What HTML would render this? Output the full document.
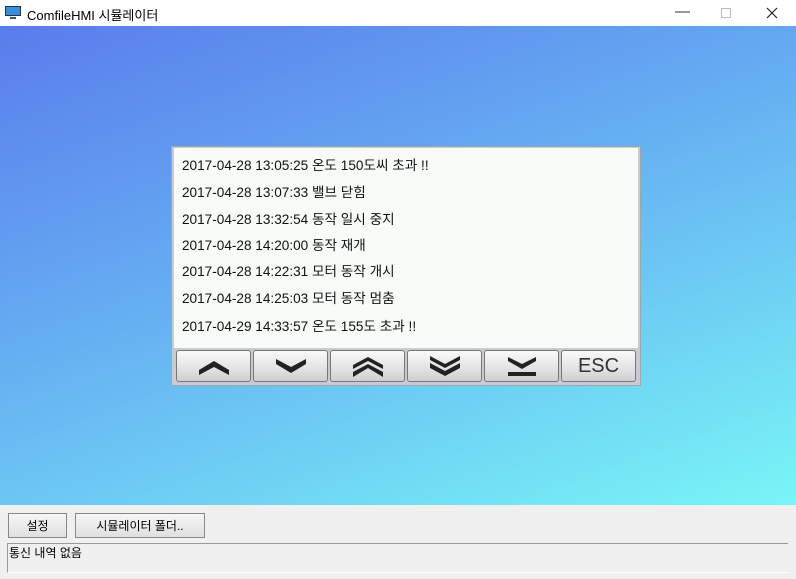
<!DOCTYPE html>
<html><head><meta charset="utf-8"><style>
*{margin:0;padding:0;box-sizing:border-box}
body{width:796px;height:579px;overflow:hidden;font-family:"Liberation Sans","Noto Sans CJK KR",sans-serif;background:#fff;position:relative}
.title{position:absolute;left:0;top:0;width:796px;height:26px;background:#fff;font-size:13px}
.title span{position:absolute;left:27px;top:5px;color:#000}
.ctl{position:absolute;top:3px;font-size:15px;color:#333}
.main{position:absolute;left:0;top:26px;width:796px;height:479px;background:linear-gradient(160deg,#5a7cec 0%,#66b0f2 45%,#78f6f6 100%)}
.panel{position:absolute;left:171px;top:120px;width:470px;height:240px;background:#c8ccd0;border:1px solid #9aa}
.list{position:absolute;left:2px;top:1px;width:464px;height:200px;background:#f8fcf8}
.row{position:absolute;left:8px;font-size:13.6px;color:#111}
.btn{position:absolute;top:203px;width:75px;height:32px;border:1px solid #777;border-radius:3px;background:linear-gradient(#fafafa,#e2e2e2 60%,#cfcfcf);display:flex;align-items:center;justify-content:center}
.bottom{position:absolute;left:0;top:505px;width:796px;height:74px;background:#f0f0f0}
.wb{position:absolute;top:8px;height:25px;border:1px solid #888;background:linear-gradient(#f6f6f6,#e0e0e0);font-size:12px;display:flex;align-items:center;justify-content:center}
.status{position:absolute;left:7px;top:38px;width:781px;height:30px;border:1px solid #999;border-right:none;border-bottom-color:#fff;font-size:12px;padding-left:1px}
</style></head><body>
<div class="title">
<svg style="position:absolute;left:5px;top:6px" width="16" height="14"><rect x="0" y="0" width="16" height="10" fill="#234"/><rect x="1" y="1" width="14" height="8" fill="#3b8fd8"/><rect x="5" y="11" width="6" height="2" fill="#456"/></svg>
<span>ComfileHMI 시뮬레이터</span>
<div class="ctl" style="left:675px">&#8212;</div>
<div style="position:absolute;left:721px;top:8px;width:10px;height:10px;border:1px solid #bbb"></div>
<svg style="position:absolute;left:766px;top:7px" width="12" height="12"><path d="M1 1L11 11M11 1L1 11" stroke="#222" stroke-width="1.2"/></svg>
</div>
<div class="main">
<div class="panel">
<div class="list">
<div class="row" style="top:6px">2017-04-28 13:05:25 온도 150도씨 초과 !!</div>
<div class="row" style="top:33px">2017-04-28 13:07:33 밸브 닫힘</div>
<div class="row" style="top:60px">2017-04-28 13:32:54 동작 일시 중지</div>
<div class="row" style="top:86px">2017-04-28 14:20:00 동작 재개</div>
<div class="row" style="top:112px">2017-04-28 14:22:31 모터 동작 개시</div>
<div class="row" style="top:139px">2017-04-28 14:25:03 모터 동작 멈춤</div>
<div class="row" style="top:167px">2017-04-29 14:33:57 온도 155도 초과 !!</div>
</div>
<div class="btn" style="left:4px"><svg width="34" height="20"><path d="M2 14L17 5L32 14L32 19L17 11L2 19Z" fill="#222"/></svg></div>
<div class="btn" style="left:81px"><svg width="34" height="20"><path d="M2 3L17 11L32 3L32 8L17 17L2 8Z" fill="#222"/></svg></div>
<div class="btn" style="left:158px"><svg width="34" height="22"><path d="M2 10L17 2L32 10L32 14L17 6L2 14Z M2 17L17 9L32 17L32 22L17 13L2 22Z" fill="#222"/></svg></div>
<div class="btn" style="left:235px"><svg width="34" height="22"><path d="M2 1L17 9L32 1L32 5L17 13L2 5Z M2 8L17 16L32 8L32 13L17 21L2 13Z" fill="#222"/></svg></div>
<div class="btn" style="left:312px"><svg width="34" height="22"><path d="M3 2L17 9L31 2L31 6L17 14L3 6Z" fill="#222"/><rect x="3" y="17" width="28" height="4" fill="#222"/></svg></div>
<div class="btn" style="left:389px;font-size:20px;color:#333">ESC</div>
</div>
</div>
<div class="bottom">
<div class="wb" style="left:8px;width:59px">설정</div>
<div class="wb" style="left:75px;width:130px">시뮬레이터 폴더..</div>
<div class="status">통신 내역 없음</div>
</div>
</body></html>
